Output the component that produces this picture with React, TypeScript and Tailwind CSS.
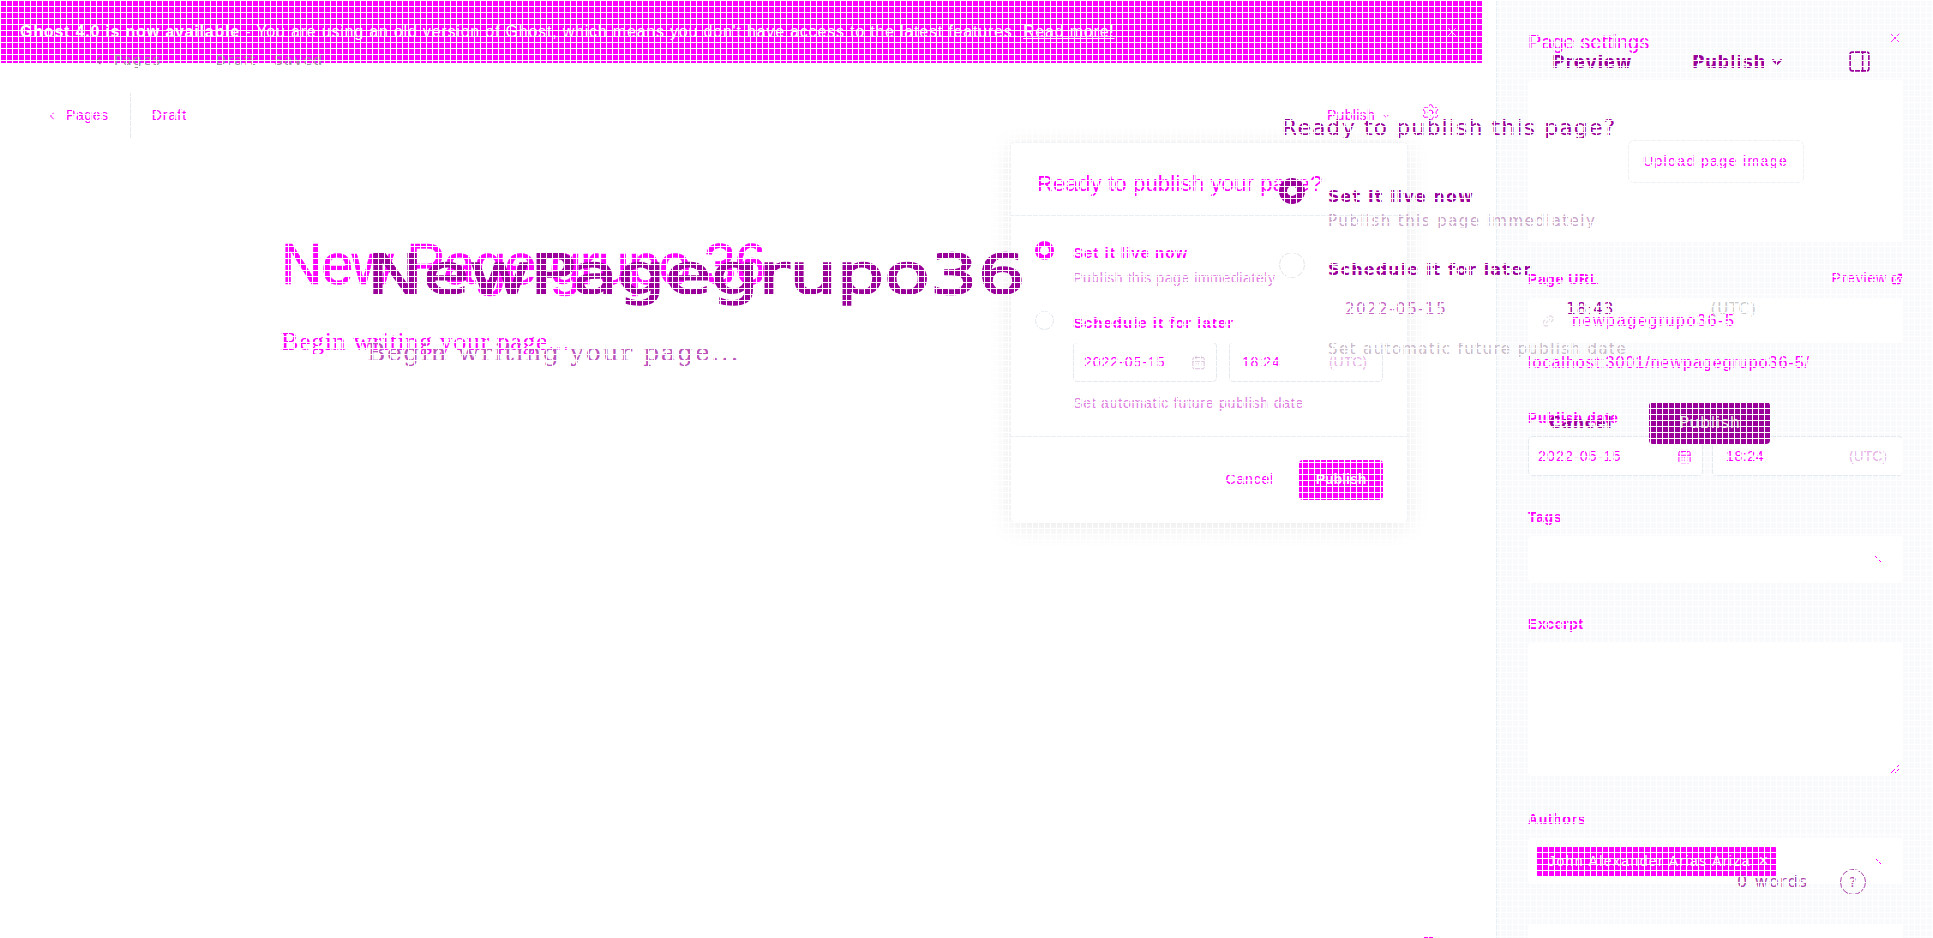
import React from 'react';
import { CalendarDays, ChevronDown, ChevronLeft, ExternalLink, Link2, Settings, X, PanelRight } from 'lucide-react';

const SANS = 'font-["Liberation_Sans",Arial,sans-serif]';

const Label: React.FC<{ className?: string; children: React.ReactNode }> = ({ className = '', children }) => (
  <div className={`text-[14px] leading-[18px] font-bold tracking-[0.6px] text-[#ff00ff] ${className}`}>{children}</div>
);

const Diagonal: React.FC = () => (
  <svg width="8" height="8" viewBox="0 0 8 8" className="shrink-0">
    <path d="M1 1l6 6" stroke="#ff00ff" strokeWidth="1" />
  </svg>
);

const DateTime: React.FC<{ time: string }> = ({ time }) => (
  <div className="flex gap-[9px]">
    <div className="w-[175px] h-10 bg-white border border-[#e3e9ef] rounded-[4px] flex items-center justify-between pl-[9px] pr-[10px] text-[14px] text-[#ff00ff]">
      <span className="tracking-[1.2px]">2022-05-15</span>
      <CalendarDays size={15} strokeWidth={1.5} className="text-[#ff00ff]" />
    </div>
    <div className="flex-1 h-10 bg-white border border-[#e3e9ef] rounded-[4px] flex items-center justify-between pl-[13px] pr-[15px] text-[14px] text-[#ff00ff]">
      <span className="tracking-[0.6px]">{time}</span>
      <span className="text-[#e6b3e6]">(UTC)</span>
    </div>
  </div>
);

const PublishMenu: React.FC = () => (
  <div className="absolute left-[1010px] top-[142px] w-[398px] h-[381px] bg-white rounded-[4px] border border-[#f1f4f7] shadow-[0_4px_24px_rgba(0,0,0,0.09)] flex flex-col">
    <div className="h-[73px] shrink-0 border-b border-[#e9eef3] flex items-center pl-[26px] pt-[8px] text-[22px] tracking-[0.2px] text-[#ff00ff]">
      Ready to publish your page?
    </div>
    <div className="flex-1 pl-[24px] pr-[24px] pt-[24px] border-b border-[#e9eef3]">
      <div className="flex gap-[19px]">
        <div className="w-[19px] h-[19px] rounded-full border-[5px] border-[#ff00ff] bg-white shrink-0 mt-[1px]" />
        <div>
          <div className="text-[15px] leading-[26px] font-bold tracking-[1px] text-[#ff00ff]">Set it live now</div>
          <div className="text-[14px] leading-[24px] tracking-[0.6px] text-[#e07de0]">Publish this page immediately</div>
        </div>
      </div>
      <div className="flex gap-[19px] mt-[20px]">
        <div className="w-[19px] h-[19px] rounded-full border border-[#dfe6ec] bg-white shrink-0 mt-[1px]" />
        <div className="flex-1">
          <div className="text-[15px] leading-[26px] font-bold tracking-[1px] text-[#ff00ff]">Schedule it for later</div>
          <div className="flex gap-3 mt-[6px]">
            <div className="w-[144px] h-10 border border-[#e3e9ef] rounded-[4px] flex items-center justify-between pl-[10px] pr-[10px] text-[14px] text-[#ff00ff]">
              <span className="tracking-[1px]">2022-05-15</span>
              <CalendarDays size={15} strokeWidth={1.5} className="text-[#d8bcd8]" />
            </div>
            <div className="flex-1 h-10 border border-[#e3e9ef] rounded-[4px] flex items-center justify-between pl-[12px] pr-[15px] text-[14px] text-[#ff00ff]">
              <span className="tracking-[0.6px]">18:24</span>
              <span className="text-[#e6b3e6]">(UTC)</span>
            </div>
          </div>
          <div className="text-[14px] leading-[20px] mt-[11px] tracking-[0.8px] text-[#e07de0]">Set automatic future publish date</div>
        </div>
      </div>
    </div>
    <div className="h-[85px] shrink-0 flex items-center justify-end gap-[25px] pr-[24px]">
      <span className="text-[14px] tracking-[0.8px] text-[#ff00ff]">Cancel</span>
      <span className="w-[84px] h-10 bg-[#ff00ff] rounded-[4px] flex items-center justify-center text-white text-[14px] font-bold">Publish</span>
    </div>
  </div>
);

const Sidebar: React.FC = () => (
  <aside className="w-[437px] shrink-0 h-[938px] overflow-hidden bg-[#f8fafc] border-l border-[#e9eef3] pl-[31px] pr-[30px]">
    <div className="h-[80px] pt-[28px] relative text-[20px] leading-[28px] text-[#ff00ff]">
      Page settings
      <X size={16} strokeWidth={1.25} className="absolute right-0 top-[30px]" />
    </div>
    <div className="h-[162px] bg-white rounded-[4px] flex items-center justify-center">
      <div className="h-[43px] w-[176px] rounded-[6px] border border-[#eef2f5] flex items-center justify-center text-[14px] tracking-[1.4px] text-[#ff00ff]">
        Upload page image
      </div>
    </div>
    <div className="flex items-center justify-between mt-[26px]">
      <Label>Page URL</Label>
      <div className="flex items-center gap-1 text-[14px] tracking-[0.8px] text-[#ff00ff]">
        Preview <ExternalLink size={12} strokeWidth={3} />
      </div>
    </div>
    <div className="h-[45px] mt-[9px] bg-white rounded-[4px] flex items-center pl-[13px] text-[16px] tracking-[1.6px] text-[#ff00ff]">
      <Link2 size={14} className="text-[#e3d9e3] mr-[17px] -rotate-45" />
      newpagegrupo36-5
    </div>
    <div className="text-[16px] tracking-[1px] leading-[18px] mt-[11px] text-[#ff00ff]">localhost:3001/newpagegrupo36-5/</div>
    <Label className="mt-[37px] mb-[9px]">Publish date</Label>
    <DateTime time="18:24" />
    <Label className="mt-[32px] mb-[10px]">Tags</Label>
    <div className="h-[46px] bg-white rounded-[4px] flex items-center justify-end pr-[21px]">
      <Diagonal />
    </div>
    <Label className="mt-[33px] mb-[10px]">Excerpt</Label>
    <div className="h-[133px] bg-white rounded-[4px] flex items-end justify-end pr-[3px] pb-[2px]">
      <svg width="10" height="10" viewBox="0 0 10 10">
        <path d="M1 9l8-8M5 9l4-4" stroke="#ff00ff" strokeWidth="1" />
      </svg>
    </div>
    <Label className="mt-[34px] mb-[10px]">Authors</Label>
    <div className="h-[46px] bg-white rounded-[4px] flex items-center justify-between pl-[9px] pr-[21px]">
      <span className="w-[239px] h-[31px] bg-[#ff00ff] rounded-[2px] flex items-center justify-between pl-[11px] pr-[8px] text-white text-[14px]">
        <span className="tracking-[1.4px]">John Alexander Arias Ariza</span>
        <span className="text-[16px]">×</span>
      </span>
      <Diagonal />
    </div>
    <div className="h-[60px] mt-[40px] bg-white rounded-[4px]" />
  </aside>
);

// second pass of the same editor, lying over the first one
const OverlayLayer: React.FC = () => (
  <div className='absolute inset-0 pointer-events-none font-["DejaVu_Sans",sans-serif]'>
    <div className="absolute left-[92px] top-[51px] flex items-center text-[#9a8f9a] text-[14px] tracking-[1.2px] leading-[18px]">
      <ChevronLeft size={13} className="text-[#a0509a]" />
      <span className="ml-[9px]">Pages</span>
      <span className="ml-[54px]">Draft - Saved</span>
    </div>
    <div className="absolute left-[1552px] top-[49px] w-[320px] flex items-center text-[#990099] text-[17px] font-semibold leading-[20px] tracking-[0.5px]">
      <span>Preview</span>
      <span className="ml-[60px]">Publish</span>
      <ChevronDown size={16} strokeWidth={3} className="ml-[3px]" />
      <PanelRight size={25} strokeWidth={1.5} className="ml-auto" />
    </div>

    <div className="absolute left-[367px] top-[238px] origin-left scale-x-[1.36] text-[55px] leading-[72px] text-[#990099] [-webkit-text-stroke:1.5px_#990099] whitespace-nowrap">
      NewPagegrupo36
    </div>
    <div className='absolute left-[367px] top-[339px] font-["DejaVu_Serif",serif] text-[25px] leading-[28px] text-[#bb55bb] tracking-[1.6px] whitespace-nowrap'>
      Begin writing your page...
    </div>

    <div className="absolute left-[1282px] top-[114px] text-[22px] leading-[28px] text-[#990099] tracking-[1.1px] whitespace-nowrap">
      Ready to publish this page?
    </div>
    <div className="absolute left-[1279px] top-[178px] w-[26px] h-[26px] rounded-full border-[8px] border-[#990099] bg-white" />
    <div className="absolute left-[1279px] top-[252px] w-[26px] h-[26px] rounded-full border border-[#e3e3e3]" />
    <div className="absolute left-[1328px] top-[186px] w-[340px] text-[#990099] whitespace-nowrap">
      <div className="text-[16px] leading-[22px] font-bold tracking-[1.1px]">Set it live now</div>
      <div className="text-[15px] leading-[22px] mt-[2px] text-[#c9a3c9] tracking-[1.45px]">Publish this page immediately</div>
      <div className="text-[16px] leading-[22px] mt-[27px] font-bold tracking-[1.1px]">Schedule it for later</div>
      <div className="flex items-center mt-[17px] text-[15px] leading-[22px] h-[22px]">
        <span className="ml-[17px] text-[#c566c5] tracking-[1.5px]">2022-05-15</span>
        <CalendarDays size={20} strokeWidth={1} className="ml-[52px] text-[#c4c4c4]" />
        <span className="ml-[67px] tracking-[1px]">18:43</span>
        <span className="ml-[96px] text-[#c9c9c9] tracking-[1px]">(UTC)</span>
      </div>
      <div className="text-[15px] leading-[22px] mt-[18px] text-[#c9b9c9] tracking-[1.4px]">Set automatic future publish date</div>
    </div>
    <div className="absolute left-[1549px] top-[402px] flex items-center gap-[37px]">
      <span className="text-[16px] font-bold text-[#990099] tracking-[0.6px]">Cancel</span>
      <span className="w-[121px] h-[42px] bg-[#990099] rounded-[4px] flex items-center justify-center text-[16px] text-[#e6e6e6] tracking-[0.6px]">Publish</span>
    </div>
    <div className="absolute left-[1737px] top-[869px] flex items-center text-[16px] text-[#aa44aa] tracking-[1.2px]">
      <span>0 words</span>
      <span className="ml-[32px] w-[26px] h-[26px] rounded-full border border-[#aa44aa] flex items-center justify-center text-[14px]">?</span>
    </div>
    <div className="absolute left-[1424px] top-[936px] w-[9px] h-[2px] bg-[#ff00ff]" />
  </div>
);

const App: React.FC = () => {
  return (
    <div className={`relative w-[1933px] h-[938px] overflow-hidden bg-white ${SANS}`}>
      <div className="flex">
        <main className="w-[1496px] shrink-0">
          <div className="w-[1482px] h-[63px] bg-[#ff00ff] text-white text-[16px] tracking-[0.8px] flex items-center justify-between pl-[20px] pr-[23px]">
            <span>
              <strong>Ghost 4.0 is now available</strong> - You are using an old version of Ghost, which means you
              don't have access to the latest features. <span className="underline">Read more!</span>
            </span>
            <X size={14} strokeWidth={1.5} />
          </div>
          <header className="h-[75px] pr-[56px] flex items-center justify-between text-[14px] text-[#ff00ff]">
            <div className="flex items-center h-[45px] mt-[30px]">
              <ChevronLeft size={12} className="ml-[46px] mr-[8px]" />
              <span className="tracking-[0.6px]">Pages</span>
              <span className="w-px h-[45px] bg-[#e3e9ef] mx-[21px]" />
              <span className="tracking-[1px]">Draft</span>
            </div>
            <div className="flex items-center mt-[30px]">
              <span className="tracking-[0.3px]">Publish</span>
              <ChevronDown size={10} className="ml-[6px] mr-[30px]" />
              <Settings size={19} strokeWidth={1.25} className="-mt-[6px]" />
            </div>
          </header>
          <div className="pl-[281px] pt-[92px]">
            <h1 className="text-[58px] leading-[68px] tracking-[-1.7px] text-[#ff00ff] [-webkit-text-stroke:0.5px_#ff00ff] whitespace-nowrap">New Page grupo 36</h1>
            <p className='font-["Liberation_Serif",serif] text-[26px] leading-[28px] tracking-[0.6px] mt-[30px] text-[#ff00ff]'>
              Begin writing your page...
            </p>
          </div>
        </main>
        <Sidebar />
      </div>
      <PublishMenu />
      <OverlayLayer />
      {/* white 6px lattice over the whole capture */}
      <div className="absolute inset-0 pointer-events-none bg-[linear-gradient(to_right,#fff_1px,transparent_1px),linear-gradient(to_bottom,#fff_1px,transparent_1px)] bg-size-[6px_6px]" />
    </div>
  );
};

export default App;
